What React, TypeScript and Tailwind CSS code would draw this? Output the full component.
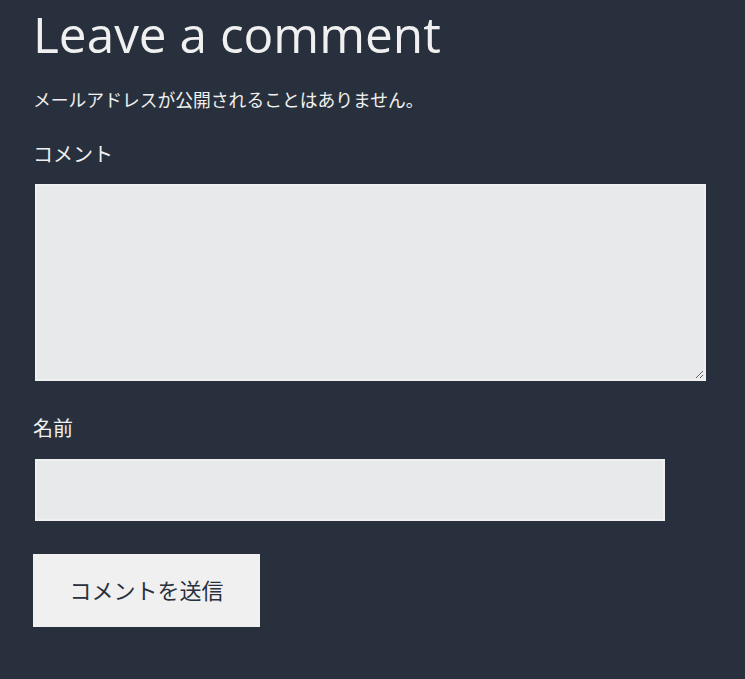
import React from "react";

export default function App() {
  const jp = { fontFamily: '"Open Sans", "Noto Sans CJK JP", sans-serif' };
  return (
    <div className="min-h-[679px] w-full bg-[#28303d] text-[#f0f0f0]" style={jp}>
      <div className="px-[33px] pt-[2px]">
        <h2 className="text-[49.5px] font-normal leading-[64px]">Leave a comment</h2>
        <p className="mt-[21px] text-[17.8px] leading-[27px]">メールアドレスが公開されることはありません。</p>
        <label className="mt-[26px] block text-[20px] leading-[30px]">コメント</label>
        <textarea className="mt-[14px] ml-[2px] block h-[197px] w-[671px] border-2 border-[#f0f0f1] bg-[#e8e9ea] outline-none" />
        <label className="mt-[33px] block text-[20px] leading-[30px]">名前</label>
        <input className="mt-[15px] ml-[2px] block h-[62px] w-[630px] border-2 border-[#f0f0f1] bg-[#e8e9ea] outline-none" />
        <button className="mt-[33px] flex h-[73px] w-[227px] items-center justify-center bg-[#f0f0f0] text-[22px] text-[#28303d]">
          コメントを送信
        </button>
      </div>
    </div>
  );
}
